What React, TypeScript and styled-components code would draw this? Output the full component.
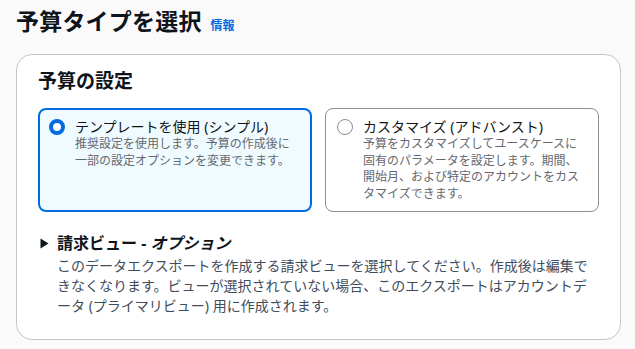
import React from "react";
import styled, { createGlobalStyle } from "styled-components";

const Global = createGlobalStyle`
  html, body { margin: 0; padding: 0; background: #fafafa; }
  body {
    font-family: "Noto Sans", "Noto Sans CJK JP", sans-serif;
    color: #0f141a;
  }
`;

const Page = styled.div`
  padding: 6px 14px 10px 16px;
`;

const Header = styled.div`
  display: flex;
  align-items: baseline;
  gap: 9px;
  margin-bottom: 18px;
`;

const Title = styled.h1`
  margin: 0;
  font-size: 23px;
  line-height: 30px;
  font-weight: 700;
  letter-spacing: 0.2px;
`;

const InfoLink = styled.a`
  font-size: 12px;
  font-weight: 700;
  color: #006ce0;
  text-decoration: none;
`;

const Card = styled.section`
  background: #ffffff;
  border: 1px solid #c6c6cd;
  border-radius: 16px;
  padding: 13px 21px 23px 21px;
`;

const CardTitle = styled.h2`
  margin: 0 0 14px 0;
  font-size: 19px;
  line-height: 26px;
  font-weight: 700;
`;

const Tiles = styled.div`
  display: grid;
  grid-template-columns: 1fr 1fr;
  gap: 13px;
  margin-bottom: 21px;
`;

const Tile = styled.label<{ $selected?: boolean }>`
  display: flex;
  align-items: flex-start;
  gap: 10px;
  border-radius: 8px;
  border: ${(p) => (p.$selected ? "2px solid #006ce0" : "1px solid #8c8c94")};
  background: ${(p) => (p.$selected ? "#f0fbff" : "#ffffff")};
  padding: ${(p) => (p.$selected ? "8px 13px 8px 9px" : "9px 14px 9px 11px")};
`;

const Radio = styled.span<{ $checked?: boolean }>`
  flex: none;
  box-sizing: border-box;
  width: 16px;
  height: 16px;
  margin-top: 1px;
  border-radius: 50%;
  background: #ffffff;
  border: ${(p) => (p.$checked ? "4px solid #006ce0" : "1.5px solid #8c8c94")};
`;

const TileBody = styled.div`
  display: flex;
  flex-direction: column;
`;

const TileTitle = styled.div`
  font-size: 14px;
  line-height: 18px;
`;

const TileDesc = styled.div`
  font-size: 12px;
  line-height: 16.6px;
  color: #656871;
`;

const Expand = styled.div`
  display: flex;
  gap: 8px;
  padding-left: 2px;
`;

const Caret = styled.svg`
  flex: none;
  margin-top: 5px;
`;

const ExpandBody = styled.div`
  display: flex;
  flex-direction: column;
`;

const ExpandTitle = styled.div`
  font-size: 16px;
  line-height: 20px;
  font-weight: 700;
  margin-bottom: 3px;
`;

const Italic = styled.span`
  font-style: italic;
`;

const ExpandDesc = styled.div`
  font-size: 14px;
  line-height: 20px;
  color: #414d5c;
`;

export default function App() {
  return (
    <>
      <Global />
      <Page>
        <Header>
          <Title>予算タイプを選択</Title>
          <InfoLink href="#">情報</InfoLink>
        </Header>
        <Card>
          <CardTitle>予算の設定</CardTitle>
          <Tiles>
            <Tile $selected>
              <Radio $checked />
              <TileBody>
                <TileTitle>テンプレートを使用 (シンプル)</TileTitle>
                <TileDesc>
                  推奨設定を使用します。予算の作成後に一部の設定オプションを変更できます。
                </TileDesc>
              </TileBody>
            </Tile>
            <Tile>
              <Radio />
              <TileBody>
                <TileTitle>カスタマイズ (アドバンスト)</TileTitle>
                <TileDesc>
                  予算をカスタマイズしてユースケースに固有のパラメータを設定します。期間、開始月、および特定のアカウントをカスタマイズできます。
                </TileDesc>
              </TileBody>
            </Tile>
          </Tiles>
          <Expand>
            <Caret width="9" height="11" viewBox="0 0 9 11">
              <path d="M0.5 0.5 L8.5 5.5 L0.5 10.5 Z" fill="#0f141a" />
            </Caret>
            <ExpandBody>
              <ExpandTitle>
                請求ビュー <Italic>- オプション</Italic>
              </ExpandTitle>
              <ExpandDesc>
                このデータエクスポートを作成する請求ビューを選択してください。作成後は編集できなくなります。ビューが選択されていない場合、このエクスポートはアカウントデータ (プライマリビュー) 用に作成されます。
              </ExpandDesc>
            </ExpandBody>
          </Expand>
        </Card>
      </Page>
    </>
  );
}
